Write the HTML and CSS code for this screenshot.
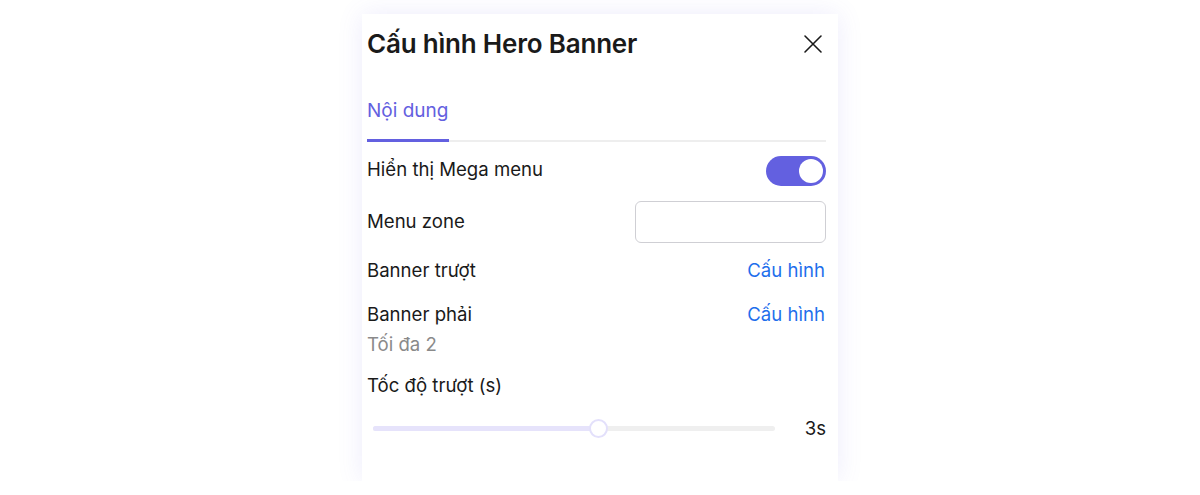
FILE: index.html
```html
<!DOCTYPE html>
<html lang="vi">
<head>
<meta charset="utf-8">
<link rel="stylesheet" href="styles.css">
</head>
<body>
<div class="panel">
  <div class="header">
    <h1 class="title">Cấu hình Hero Banner</h1>
    <button class="close" aria-label="Đóng">
      <svg width="20" height="20" viewBox="0 0 20 20"><path d="M2 2L18 18M18 2L2 18" stroke="#1a1a1a" stroke-width="1.6" stroke-linecap="round"/></svg>
    </button>
  </div>
  <div class="tabs">
    <div class="tab active">Nội dung</div>
  </div>
  <div class="row row-toggle">
    <span class="label">Hiển thị Mega menu</span>
    <span class="toggle"><span class="knob"></span></span>
  </div>
  <div class="row row-input">
    <span class="label">Menu zone</span>
    <input class="input" type="text">
  </div>
  <div class="row row-link">
    <span class="label">Banner trượt</span>
    <a class="link">Cấu hình</a>
  </div>
  <div class="row row-link2">
    <div class="stack">
      <span class="label">Banner phải</span>
      <span class="hint">Tối đa 2</span>
    </div>
    <a class="link">Cấu hình</a>
  </div>
  <div class="row row-speed">
    <span class="label">Tốc độ trượt (s)</span>
  </div>
  <div class="slider-row">
    <div class="slider">
      <div class="track"><div class="fill" style="width:56%"></div></div>
      <div class="thumb" style="left:56%"></div>
    </div>
    <span class="value">3s</span>
  </div>
</div>
</body>
</html>
```
FILE: styles.css
```css
* { box-sizing: border-box; }
html, body { margin: 0; padding: 0; background: #fff; }
body {
  font-family: Inter, "Noto Sans", sans-serif;
  color: #1a1a1a;
  padding-top: 14px;
}
.panel {
  width: 476px;
  height: 467px;
  margin: 0 auto;
  background: #fff;
  box-shadow: 0 0 24px rgba(110, 100, 230, 0.12);
  padding: 15px 12px 0 5px;
}
.header {
  display: flex;
  justify-content: space-between;
  align-items: center;
  height: 30px;
}
.title {
  margin: 0;
  font-size: 26px;
  font-weight: 600;
  line-height: 30px;
  letter-spacing: -0.2px;
}
.close {
  border: 0;
  background: none;
  padding: 0;
  width: 20px;
  height: 20px;
  margin-right: 3px;
  display: flex;
}
.tabs {
  margin-top: 40px;
  border-bottom: 2px solid #eeeeee;
  display: flex;
}
.tab {
  font-size: 19px;
  line-height: 24px;
  padding: 0 0 17px;
  color: #6360e0;
  position: relative;
}
.tab.active::after {
  content: "";
  position: absolute;
  left: 0;
  right: -1px;
  bottom: -2px;
  height: 3px;
  background: #6360e0;
}
.row {
  display: flex;
  justify-content: space-between;
  align-items: center;
}
.label { font-size: 18.6px; line-height: 24px; }
.row-toggle { margin-top: 14px; height: 30px; align-items: flex-start; }
.row-toggle .label { margin-top: 1px; }
.toggle {
  width: 60px;
  height: 30px;
  border-radius: 15px;
  background: #6360e0;
  position: relative;
}
.knob {
  position: absolute;
  right: 3px;
  top: 3px;
  width: 24px;
  height: 24px;
  border-radius: 50%;
  background: #fff;
}
.row-input { margin-top: 15px; height: 42px; }
.row-input .label { margin-top: -3px; }
.input {
  width: 191px;
  height: 42px;
  border: 1px solid #cfcfd4;
  border-radius: 6px;
  background: #fff;
  outline: none;
}
.row-link { margin-top: 15px; height: 24px; }
.link { color: #1f6fec; font-size: 18.6px; line-height: 24px; cursor: pointer; margin-right: 1px; }
.row-link2 { margin-top: 20px; align-items: flex-start; }
.stack { display: flex; flex-direction: column; gap: 6px; }
.hint { font-size: 18.6px; line-height: 24px; color: #8a8a8a; }
.row-speed { margin-top: 17px; }
.slider-row {
  display: flex;
  align-items: center;
  margin-top: 19px;
  height: 24px;
}
.slider {
  position: relative;
  margin-left: 6px;
  width: 402px;
  height: 19px;
  display: flex;
  align-items: center;
}
.track {
  width: 100%;
  height: 5px;
  border-radius: 3px;
  background: #efefef;
  overflow: hidden;
}
.fill { height: 100%; background: #e6e3fb; }
.thumb {
  position: absolute;
  top: 0;
  width: 19px;
  height: 19px;
  margin-left: -9px;
  border-radius: 50%;
  background: #fff;
  border: 2px solid #e3e0fb;
}
.value { margin-left: auto; font-size: 18.6px; line-height: 24px; }
```
